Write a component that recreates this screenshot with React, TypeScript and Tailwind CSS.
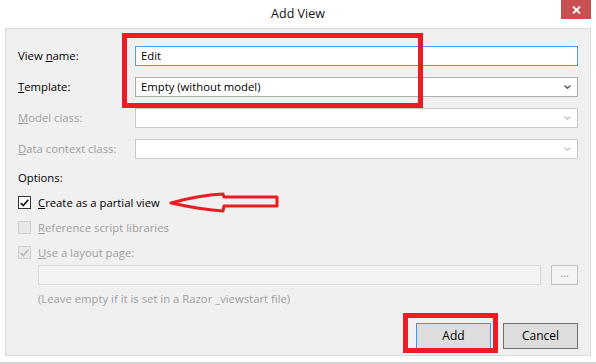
import type { ReactNode } from "react";

const FONT = "font-['Segoe_UI','Open_Sans',sans-serif]";

function Chevron({ disabled }: { disabled?: boolean }) {
  return (
    <svg width="7" height="4" viewBox="0 0 7 4" className="shrink-0">
      <path
        d="M0.5 0.5 L3.5 3.3 L6.5 0.5"
        fill="none"
        stroke={disabled ? "#c4c4c4" : "#555555"}
        strokeWidth="1.3"
      />
    </svg>
  );
}

function FieldRow({ label, children }: { label: ReactNode; children: ReactNode }) {
  return (
    <div className="flex h-[20px] items-center">
      <div className="w-[117px] shrink-0 leading-[16px]">{label}</div>
      {children}
    </div>
  );
}

function Select({ value, disabled }: { value?: string; disabled?: boolean }) {
  return (
    <div
      className={`flex h-[20px] flex-1 items-center justify-between border bg-white pl-[5px] pr-[6px] ${
        disabled ? "border-[#c8c8c8]" : "border-[#acacac]"
      }`}
    >
      <span className="leading-[16px] text-black">{value}</span>
      <Chevron disabled={disabled} />
    </div>
  );
}

function CheckBox({ checked, disabled }: { checked?: boolean; disabled?: boolean }) {
  return (
    <div
      className={`flex h-[13px] w-[13px] shrink-0 items-center justify-center border ${
        disabled ? "border-[#cfcfcf] bg-[#e8e8e8]" : "border-[#333333] bg-white"
      }`}
    >
      {checked ? (
        <svg width="9" height="8" viewBox="0 0 9 8">
          <path
            d="M0.8 4.2 L3.3 6.6 L8.2 0.8"
            fill="none"
            stroke={disabled ? "#b8b8b8" : "#111111"}
            strokeWidth="1.6"
          />
        </svg>
      ) : null}
    </div>
  );
}

function CheckRow({
  children,
  checked,
  disabled,
}: {
  children: ReactNode;
  checked?: boolean;
  disabled?: boolean;
}) {
  return (
    <div className="flex h-[17px] items-center gap-[7px]">
      <CheckBox checked={checked} disabled={disabled} />
      <span className={`leading-[16px] ${disabled ? "text-[#a0a0a0]" : "text-black"}`}>{children}</span>
    </div>
  );
}

export default function App() {
  return (
    <div className={`relative h-[364px] w-[596px] overflow-hidden bg-white text-[11.3px] text-black ${FONT}`}>
      {/* title bar */}
      <div className="relative flex h-[28px] items-center justify-center">
        <span className="text-[12.5px] leading-[18px] text-[#111]">Add View</span>
        <div className="absolute right-[5px] top-0 flex h-[19px] w-[30px] items-center justify-center bg-[#c75050]">
          <svg width="9" height="8" viewBox="0 0 9 8">
            <path d="M1 0.5 L8 7.5 M8 0.5 L1 7.5" stroke="white" strokeWidth="1.8" />
          </svg>
        </div>
      </div>

      {/* dialog body */}
      <div className="mx-[5px] flex h-[328px] flex-col border border-[#dadada] bg-[#f0f0f0] px-[12px] pt-[17px]">
        <div className="flex flex-col gap-[11px]">
          <FieldRow
            label={
              <>
                View <span className="underline">n</span>ame:
              </>
            }
          >
            <div className="flex h-[20px] flex-1 items-center border border-[#569de5] bg-white pl-[5px]">
              <span className="leading-[16px]">Edit</span>
            </div>
          </FieldRow>
          <FieldRow
            label={
              <>
                <span className="underline">T</span>emplate:
              </>
            }
          >
            <Select value="Empty (without model)" />
          </FieldRow>
          <FieldRow
            label={
              <span className="text-[#a0a0a0]">
                <span className="underline">M</span>odel class:
              </span>
            }
          >
            <Select disabled />
          </FieldRow>
          <FieldRow
            label={
              <span className="text-[#a0a0a0]">
                <span className="underline">D</span>ata context class:
              </span>
            }
          >
            <Select disabled />
          </FieldRow>
        </div>

        <div className="mt-[11px] h-[16px] leading-[16px]">Options:</div>

        <div className="mt-[8px] flex flex-col gap-[8px]">
          <CheckRow checked>
            <span className="underline">C</span>reate as a partial view
          </CheckRow>
          <CheckRow disabled>
            <span className="underline">R</span>eference script libraries
          </CheckRow>
          <CheckRow checked disabled>
            <span className="underline">U</span>se a layout page:
          </CheckRow>
        </div>

        <div className="ml-[20px] mt-[4px] flex h-[20px] items-center gap-[10px]">
          <div className="h-[20px] flex-1 border border-[#d9d9d9] bg-[#f3f3f3]" />
          <div className="flex h-[20px] w-[27px] items-center justify-center border border-[#c2c2c2] bg-[#f3f3f3] pb-[3px] text-[11px] text-[#9a9a9a]">
            ...
          </div>
        </div>

        <div className="ml-[20px] mt-[6px] h-[16px] leading-[16px] text-[#a0a0a0]">
          (Leave empty if it is set in a Razor _viewstart file)
        </div>

        <div className="mt-[16px] flex justify-end gap-[12px]">
          <div className="flex h-[26px] w-[75px] items-center justify-center border border-[#3399ff] bg-[#dddddd] text-[12px]">
            Add
          </div>
          <div className="flex h-[26px] w-[75px] items-center justify-center border border-[#707070] bg-[#dddddd] text-[12px]">
            Cancel
          </div>
        </div>
      </div>

      <div className="mt-[6px] h-[2px] w-full bg-[#d4d4d4]" />

      {/* annotations */}
      <div className="absolute left-[122px] top-[33px] h-[75px] w-[301px] border-[5px] border-[#ed1c24]" />
      <div className="absolute left-[403px] top-[313px] h-[40px] w-[95px] border-[5px] border-[#ed1c24]" />
      <svg className="absolute left-[165px] top-[189px]" width="118" height="28" viewBox="165 189 118 28">
        <path
          d="M171 203 C185 199 205 195 223 194 L224 197 L277 197 L277 206 L224 206 L223 211 C205 210 185 206 171 203 Z"
          fill="#f0f0f0"
          stroke="#ed1c24"
          strokeWidth="3"
          strokeLinejoin="round"
        />
      </svg>
    </div>
  );
}
